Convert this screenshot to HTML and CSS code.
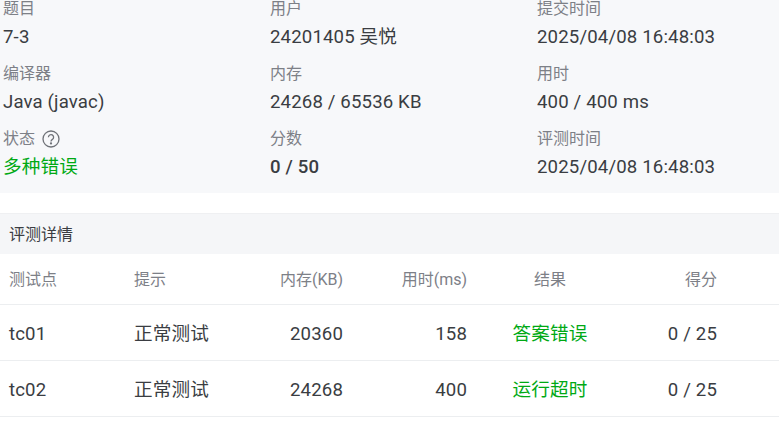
FILE: index.html
```html
<!DOCTYPE html>
<html lang="zh-CN">
<head>
    <meta charset="UTF-8">
    <title>提交详情</title>
    <link rel="stylesheet" href="styles.css">
</head>
<body>
    <div class="summary">
        <div class="field"><div class="label">题目</div><div class="value">7-3</div></div>
        <div class="field"><div class="label">用户</div><div class="value">24201405 吴悦</div></div>
        <div class="field"><div class="label">提交时间</div><div class="value">2025/04/08 16:48:03</div></div>
        <div class="field"><div class="label">编译器</div><div class="value">Java (javac)</div></div>
        <div class="field"><div class="label">内存</div><div class="value">24268 / 65536 KB</div></div>
        <div class="field"><div class="label">用时</div><div class="value">400 / 400 ms</div></div>
        <div class="field">
            <div class="label">状态
                <svg class="help" width="18" height="18" viewBox="0 0 18 18" fill="none" stroke="#6f7278" stroke-width="1.3">
                    <circle cx="9" cy="9" r="8"/>
                    <path d="M6.4 7.2a2.6 2.6 0 1 1 4 2.2c-.9.6-1.4 1-1.4 2.1"/>
                    <circle cx="9" cy="13.4" r=".5"/>
                </svg>
            </div>
            <div class="value accepted">多种错误</div>
        </div>
        <div class="field"><div class="label">分数</div><div class="value strong">0 / 50</div></div>
        <div class="field"><div class="label">评测时间</div><div class="value">2025/04/08 16:48:03</div></div>
    </div>

    <div class="section-title">评测详情</div>
    <table class="cases">
        <colgroup>
            <col class="c1"><col class="c2"><col class="c3"><col class="c4"><col class="c5"><col class="c6"><col>
        </colgroup>
        <thead>
            <tr><th>测试点</th><th>提示</th><th class="num">内存(KB)</th><th class="num">用时(ms)</th><th class="mid">结果</th><th class="num">得分</th><th></th></tr>
        </thead>
        <tbody>
            <tr><td>tc01</td><td>正常测试</td><td class="num">20360</td><td class="num">158</td><td class="mid accepted">答案错误</td><td class="num">0 / 25</td><td></td></tr>
            <tr><td>tc02</td><td>正常测试</td><td class="num">24268</td><td class="num">400</td><td class="mid accepted">运行超时</td><td class="num">0 / 25</td><td></td></tr>
        </tbody>
    </table>
</body>
</html>
```

FILE: styles.css
```css
body { margin: 0; font-family: Roboto, "Noto Sans CJK SC", sans-serif; color: #3a3d42; background: #fff; overflow: hidden; }
.summary { display: grid; grid-template-columns: 267px 267px 1fr; padding: 1px 0 11px 3px; background: #f7f8fa; height: 181px; }
.field { height: 65px; }
.label { display: flex; align-items: center; gap: 7px; height: 16px; margin-bottom: 7px; font-size: 16px; line-height: 16px; color: #7d8087; }
.value { font-size: 18.6px; line-height: 26px; letter-spacing: .15px; }
.strong { font-weight: 500; }
.accepted { color: #00a914; }
.help { flex: none; }
.section-title { margin-top: 20px; height: 40px; border-top: 1px solid #eff0f2; background: #f5f6f8; padding-left: 9px; font-size: 16px; line-height: 41px; }
.cases { width: 100%; table-layout: fixed; border-collapse: collapse; }
.c1, .c2 { width: 125px; }
.c3 { width: 102px; }
.c4 { width: 124px; }
.c5 { width: 148px; }
.c6 { width: 102px; }
.cases th, .cases td { box-sizing: border-box; padding: 0 9px; text-align: left; border-bottom: 1px solid #eceef0; white-space: nowrap; }
.cases th { height: 50px; padding-top: 3px; font-size: 16px; line-height: 22px; font-weight: 400; color: #7d8087; }
.cases td { height: 56px; padding-top: 4px; font-size: 18.6px; line-height: 26px; letter-spacing: .15px; }
.cases .num { text-align: right; }
.cases .mid { text-align: center; }
```
